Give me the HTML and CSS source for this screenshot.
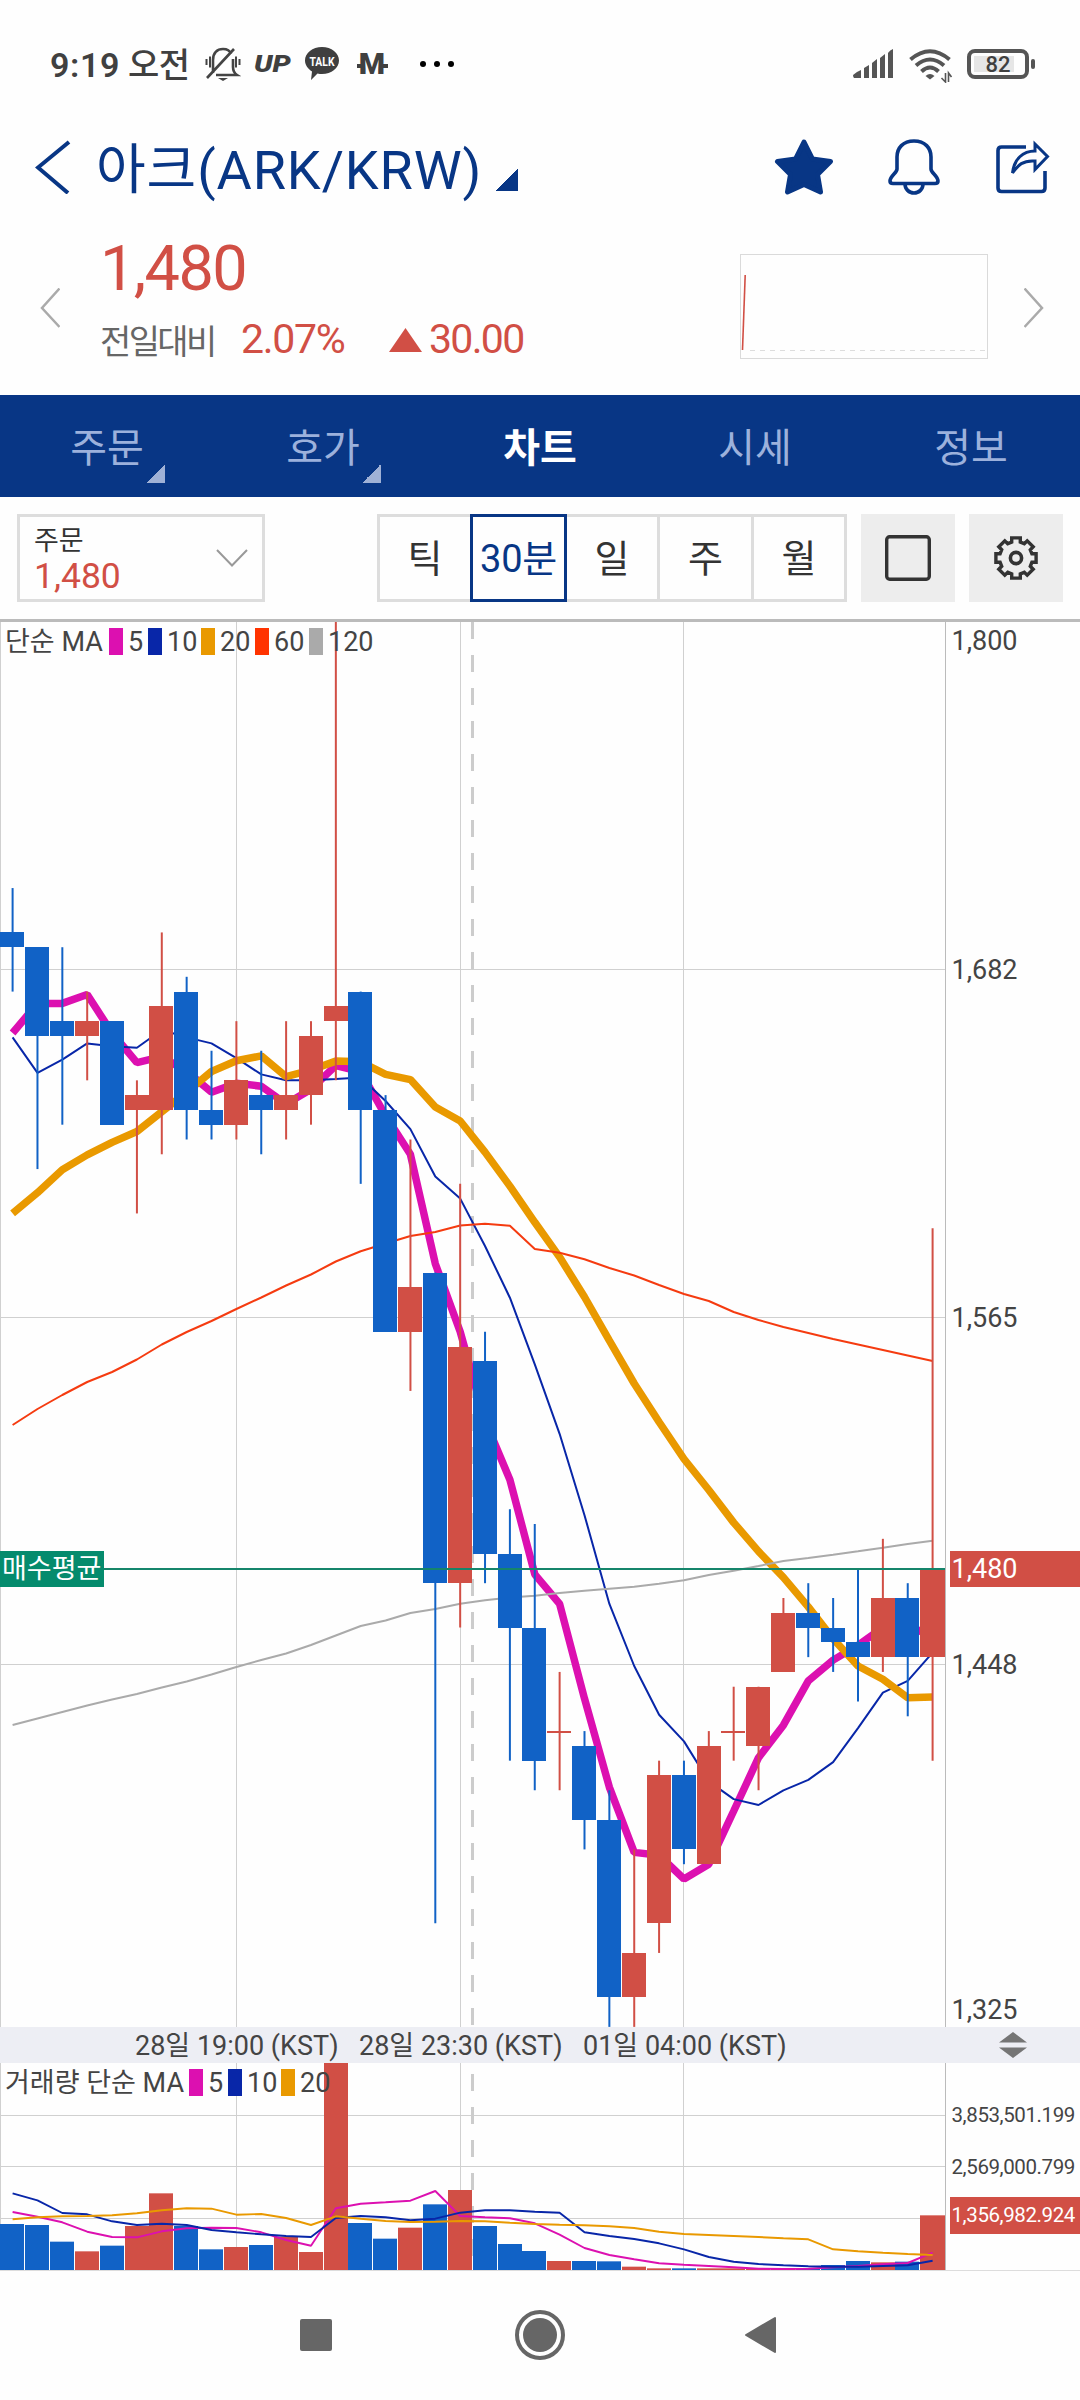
FILE: index.html
```html
<!DOCTYPE html>
<html lang="ko">
<head>
  <meta charset="UTF-8" />
  <meta name="viewport" content="width=device-width, initial-scale=1.0"/>
  <title>아크(ARK/KRW)</title>
  <link rel="stylesheet" href="styles.css">
</head>
<body>
  <div class="status-bar">
    <span class="time">9:19 <b>오전</b></span>
    <svg class="ico-mute" width="36" height="34" viewBox="0 0 36 34" fill="none" stroke="#444" stroke-width="2.6">
      <path d="M8 26V13C8 6 12 2 18 2c4 0 7 2 8 5M28 12v8c0 4 1 6 4 8H11M29 2L2 31"/>
      <path d="M1.500 12v6M5 9.500v11M31 9.500v11M34.500 12v6" stroke-width="2"/>
      <path d="M13 31h10l-5 3z" fill="#444" stroke="none"/>
    </svg>
    <span class="up">UP</span>
    <svg class="ico-talk" width="34" height="34" viewBox="0 0 34 34">
      <path fill="#3f3f3f" d="M17 0c9.500 0 17 6 17 13.500S26.500 27 17 27c-1.500 0-3 0-4.500-.5L6 33l1-8.500C3 22 0 18 0 13.500 0 6 7.500 0 17 0z"/>
      <text x="17" y="18.500" text-anchor="middle" textLength="25" lengthAdjust="spacingAndGlyphs" class="talk">TALK</text>
    </svg>
    <span class="mk">M</span>
    <span class="dots"><i></i><i></i><i></i></span>
    <svg class="ico-signal" width="42" height="30" viewBox="0 0 42 30" fill="#555">
      <path d="M0 26q3-3 8-5v8H1q-1-1-1-3zM11 19l5-3v13h-5zM19 14l5-4v19h-5zM27 9l5-4v24h-5zM35 4q2-3 5-4v29h-5z"/>
    </svg>
    <svg class="ico-wifi" width="44" height="34" viewBox="0 0 44 34" fill="none" stroke="#555" stroke-width="4">
      <path d="M1.500 10.500Q21 -6 40.500 10.500M7 16.500Q21 4.500 35 16.500M12.500 22.500Q21 14.500 29.500 22.500"/>
      <path d="M16.500 27q4.500-4 9 0l-4.500 3.500z" fill="#555" stroke="none"/>
      <path d="M36.500 24v9l-4-4M39.500 33v-9l3 4" stroke-width="1.600"/>
    </svg>
    <span class="battery">82</span><i class="nub"></i>
  </div>

  <div class="title-bar">
    <svg width="36" height="54" viewBox="0 0 36 54" fill="none" stroke="#083685" stroke-width="4">
      <path d="M34 2L3 27.500L33 53"/>
    </svg>
    <h1>아크(ARK/KRW)</h1>
    <i class="corner"></i>
    <div class="actions">
      <svg width="60" height="56" viewBox="0 0 60 56" fill="#083685" stroke="#083685" stroke-width="5" stroke-linejoin="round">
        <path d="M30 3L38.500 20L56.500 22.500L43.500 35.500L46.500 53L30 45.500L13.500 53L16.500 35.500L3.500 22.500L21.500 20Z"/>
      </svg>
      <svg width="54" height="56" viewBox="0 0 54 56" fill="none" stroke="#083685" stroke-width="3.600">
        <path d="M27 2C16 2 10 9 10 18v12c0 4-7 7-7 12 0 1.500 1 2.500 3 2.500h42c2 0 3-1 3-2.500 0-5-7-8-7-12V18C44 9 38 2 27 2z"/>
        <path d="M18 45c0 5 4 9 9 9s9-4 9-9"/>
      </svg>
      <svg width="54" height="54" viewBox="0 0 54 54" fill="none" stroke="#083685" stroke-width="3.600">
        <path d="M30 7H5.500Q2 7 2 10.500V48q0 3.500 3.500 3.500h40q3.500 0 3.500-3.500V31"/>
        <path d="M39 4L51.500 16.500L39 29.500V21C27 20 22 25 16.500 33C18 19 27 11 39 11Z" stroke-width="3"/>
      </svg>
    </div>
  </div>

  <div class="quote">
    <svg class="prev" width="20" height="40" viewBox="0 0 20 40"><path d="M19.500 .5L2 20L19.500 39"/></svg>
    <div class="quote-info">
      <div class="price">1,480</div>
      <div class="change">
        <span class="label">전일대비</span>
        <span class="rate">2.07%</span>
        <i class="up-arrow"></i>
        <span class="diff">30.00</span>
      </div>
    </div>
    <svg class="mini" width="248" height="105" viewBox="0 0 248 105" fill="none">
      <rect x=".5" y=".5" width="247" height="104" stroke="#dadada"/>
      <path d="M10 96.500H247" stroke="#ddd" stroke-dasharray="5 5"/>
      <path d="M2.500 96L5.200 21" stroke="#d14f45" stroke-width="1.600"/>
    </svg>
    <svg class="next" width="20" height="40" viewBox="0 0 20 40"><path d="M.5 .5L18 20L.5 39"/></svg>
  </div>

  <div class="tabs">
    <div class="tab more">주문</div>
    <div class="tab more">호가</div>
    <div class="tab active">차트</div>
    <div class="tab">시세</div>
    <div class="tab">정보</div>
  </div>

  <div class="toolbar">
    <div class="order">
      <div>
        <div class="order-label">주문</div>
        <div class="order-price">1,480</div>
      </div>
      <svg width="32" height="18" viewBox="0 0 32 18" fill="none" stroke="#999" stroke-width="2"><path d="M1 1L16 16.500L31 1"/></svg>
    </div>
    <div class="periods">
      <div class="period">틱</div>
      <div class="period active">30분</div>
      <div class="period">일</div>
      <div class="period">주</div>
      <div class="period">월</div>
    </div>
    <div class="tool">
      <svg width="46" height="46" viewBox="0 0 46 46" fill="none" stroke="#333" stroke-width="3.400"><rect x="1.700" y="1.700" width="42.600" height="42.600" rx="3"/></svg>
    </div>
    <div class="tool">
      <svg width="46" height="46" viewBox="0 0 46 46" fill="none" stroke="#333" stroke-width="3.600" id="gear">
        <circle cx="23" cy="23" r="5.600"/>
      </svg>
    </div>
  </div>

  <svg class="pane" id="priceChart" width="1080" height="1405" viewBox="0 0 1080 1405"></svg>
  <div class="time-axis">
    <span>28일 19:00 (KST)</span>
    <span>28일 23:30 (KST)</span>
    <span>01일 04:00 (KST)</span>
    <svg width="28" height="26" viewBox="0 0 28 26" fill="#757575"><path d="M14 0L28 10.500H0zM0 15.500h28L14 26z"/></svg>
  </div>
  <svg class="pane" id="volumeChart" width="1080" height="208" viewBox="0 0 1080 208"></svg>

  <div class="nav-bar">
    <svg width="32" height="32"><rect width="32" height="32" rx="2" fill="#666"/></svg>
    <svg width="50" height="50"><circle cx="25" cy="25" r="23" fill="none" stroke="#666" stroke-width="4"/><circle cx="25" cy="25" r="17" fill="#666"/></svg>
    <svg width="32" height="38"><path d="M1 19L30 2V36Z" fill="#666" stroke="#666" stroke-width="2" stroke-linejoin="round"/></svg>
  </div>

  <script src="chart.js"></script>
</body>
</html>
```

FILE: styles.css
```css
* {
  box-sizing: border-box;
}
body {
  width: 1080px;
  height: 2400px;
  margin: 0;
  overflow: hidden;
  background: #fefefe;
  color: #333;
  font-family: Roboto, "Noto Sans CJK KR", sans-serif;
}
svg {
  display: block;
  flex: none;
}
i {
  display: block;
  flex: none;
}

/* status bar */
.status-bar {
  display: flex;
  align-items: center;
  height: 128px;
  padding-left: 50px;
  color: #404040;
}
.time {
  width: 155px;
  padding-bottom: 3px;
  font-size: 34px;
  font-weight: 600;
  letter-spacing: 0.6px;
  white-space: nowrap;
}
.time b {
  font-weight: 500;
  margin-left: -1px;
  letter-spacing: -0.5px;
}
.up {
  width: 51px;
  margin-left: 13px;
  font-size: 24px;
  font-weight: 900;
  font-style: italic;
  transform: scaleX(1.2);
  transform-origin: left;
}
.talk {
  font-size: 12px;
  font-weight: 700;
  fill: #fff;
}
.mk {
  width: 31px;
  margin-left: 18px;
  font-size: 30px;
  line-height: 36px;
  font-weight: 900;
  text-align: center;
  text-indent: -1px;
  background:
    linear-gradient(#404040, #404040) 0 18px / 5px 4px no-repeat,
    linear-gradient(#404040, #404040) 100% 18px / 5px 4px no-repeat;
}
.dots {
  display: flex;
  gap: 8px;
  margin-left: 32px;
}
.dots i {
  width: 6px;
  height: 6px;
  border-radius: 50%;
  background: #000;
}
.ico-signal {
  margin-left: 399px;
}
.ico-wifi {
  margin-left: 14px;
  margin-top: 3px;
}
.battery {
  width: 62px;
  height: 30px;
  margin-left: 14px;
  border: 4px solid #555;
  border-radius: 8px;
  background: linear-gradient(#e6e6e6, #e6e6e6) 3px 3px / 40px 16px no-repeat;
  font-size: 22px;
  font-weight: 500;
  line-height: 24px;
  text-align: center;
}
.nub {
  width: 4px;
  height: 10px;
  margin-left: 2px;
  border-radius: 2px;
  background: #555;
}

/* title */
.title-bar {
  display: flex;
  align-items: center;
  height: 78px;
  padding-left: 35px;
}
.title-bar h1 {
  width: 400px;
  margin: -4px 0 0 25px;
  color: #083685;
  font-size: 54px;
  font-weight: 400;
  letter-spacing: 0.9px;
  white-space: nowrap;
}
.corner {
  width: 22px;
  height: 22px;
  margin-top: 26px;
  background: linear-gradient(135deg, transparent 50%, #083685 50%);
}
.actions {
  display: flex;
  align-items: center;
  gap: 53px;
  margin-left: 256px;
}
.actions svg:nth-child(2) {
  margin-right: 2px;
}

/* quote */
.quote {
  display: flex;
  height: 189px;
  padding-left: 40px;
}
.quote path {
  fill: none;
}
.prev, .next {
  margin-top: 82px;
  stroke: #aaa;
  stroke-width: 2.5;
}
.quote-info {
  width: 640px;
  margin-left: 40px;
  padding-top: 26px;
}
.price {
  color: #d14f45;
  font-size: 63px;
  line-height: 74px;
  letter-spacing: -1.6px;
}
.change {
  display: flex;
  align-items: center;
  height: 56px;
  margin-top: 5px;
  color: #d14f45;
  font-size: 41px;
  letter-spacing: -1.3px;
}
.change .label {
  width: 141px;
  color: #666;
  font-size: 34px;
  letter-spacing: -2.6px;
}
.rate {
  width: 148px;
}
.up-arrow {
  width: 33px;
  height: 24px;
  margin: 2px 7px 0 0;
  background: #d14f45;
  clip-path: polygon(50% 0, 100% 100%, 0 100%);
}
.diff {
  letter-spacing: -1.7px;
}
.mini {
  margin-top: 48px;
}
.next {
  margin-left: 36px;
}

/* tabs */
.tabs {
  display: flex;
  height: 102px;
  background: #083685;
}
.tab {
  position: relative;
  width: 216px;
  padding-right: 2px;
  color: #9cb1dc;
  font-size: 40px;
  line-height: 107px;
  text-align: center;
}
.tab.active {
  padding-right: 0;
  color: #fff;
  font-weight: 700;
}
.tab.more::after {
  content: "";
  position: absolute;
  right: 51px;
  top: 69px;
  width: 19px;
  height: 19px;
  background: linear-gradient(135deg, transparent 50%, #9fb1d6 50%);
}

/* toolbar */
.toolbar {
  display: flex;
  height: 125px;
  padding: 17px 17px 0;
  border-bottom: 3px solid #bbb;
}
.order {
  display: flex;
  align-items: center;
  justify-content: space-between;
  width: 248px;
  height: 88px;
  padding: 3px 14px 0 14px;
  border: 3px solid #ddd;
}
.order-label {
  font-size: 27px;
  line-height: 34px;
}
.order-price {
  color: #d14f45;
  font-size: 35.5px;
  line-height: 37px;
}
.order svg {
  margin-bottom: 3px;
}
.periods {
  display: flex;
  margin-left: 112px;
}
.period {
  width: 96.5px;
  height: 88px;
  margin-right: -3px;
  border: 3px solid #ddd;
  font-size: 38px;
  line-height: 84px;
  text-align: center;
}
.period.active {
  z-index: 1;
  border-color: #083685;
  color: #083685;
  letter-spacing: -0.3px;
}
.tool {
  display: flex;
  align-items: center;
  justify-content: center;
  width: 94px;
  height: 88px;
  margin-left: 14px;
  background: #ededed;
}
.periods + .tool {
  margin-left: 17px;
}

/* charts */
.pane text {
  fill: #444;
  font-size: 27px;
}
.pane text.small {
  font-size: 20.5px;
  letter-spacing: -0.4px;
}
.pane text.light {
  fill: #fff;
}
.grid {
  stroke: #d0d0d0;
  fill: none;
}
.day-line {
  stroke: #ccc;
  stroke-width: 3;
  stroke-dasharray: 17 16;
}
.time-axis {
  display: flex;
  align-items: center;
  height: 36px;
  padding-left: 135px;
  background: #edeef4;
  color: #444;
  font-size: 27px;
}
.time-axis span {
  width: 224px;
  padding-bottom: 3px;
  white-space: nowrap;
}
.time-axis svg {
  margin-left: 192px;
}

/* android navigation */
.nav-bar {
  display: flex;
  align-items: center;
  height: 128px;
  padding-left: 300px;
}
.nav-bar svg:nth-child(2) {
  margin: 0 204px 0 183px;
}
.nav-bar svg:nth-child(3) {
  margin-left: -24px;
}
```

FILE: chart.js
```js
const BLUE = "#1162c6", RED = "#d14f45";
const MA = { 5: "#dc10b0", 10: "#0826a8", 20: "#e99900", 60: "#f53b10", 120: "#aaa" };
const STEP = 24.865;
const PLOT_W = 946;

// open, high, low, close
const candles = [
  [1695,1710,1675,1690], [1690,1690,1615,1660], [1665,1690,1630,1660], [1660,1675,1645,1665],
  [1665,1665,1630,1630], [1635,1645,1600,1640], [1635,1695,1620,1670], [1675,1680,1625,1635],
  [1635,1655,1625,1630], [1630,1665,1625,1645], [1640,1655,1620,1635], [1635,1665,1625,1640],
  [1640,1665,1630,1660], [1665,1810,1645,1670], [1675,1675,1610,1635], [1635,1640,1560,1560],
  [1560,1625,1540,1575], [1580,1580,1360,1475], [1475,1610,1460,1555], [1550,1560,1475,1485],
  [1485,1500,1415,1460], [1460,1495,1405,1415], [1425,1445,1405,1425], [1420,1425,1385,1395],
  [1395,1405,1325,1335], [1335,1385,1325,1350], [1360,1415,1350,1410], [1410,1415,1380,1385],
  [1380,1425,1380,1420], [1425,1440,1415,1425], [1420,1440,1405,1440], [1445,1470,1445,1465],
  [1465,1475,1450,1460], [1460,1470,1445,1455], [1455,1480,1435,1450], [1450,1490,1445,1470],
  [1470,1475,1430,1450], [1450,1595,1415,1480]
];
// closes before the visible range, oldest first
const history = [1780,1615,1610,1640,1645,1610,1660,1650,1695];
const ma20Lead = [1600,1607,1614.8,1619.8,1624,1627.7,1634.4,1641,1648,1651.6];
// long averages, in pane pixels
const ma60 = [803,787,773,760,750,737.5,722.5,710,699,687,675.5,663.5,652.5,639.5,629.3,621.5,614,610,603.5,601.7,
  603.7,627,630.7,637.3,646,653.5,663,672,679,690,698,705,711,717,722.5,728,733.5,739];
const ma120 = [1103,1096.5,1090,1083.5,1077.5,1072,1065.5,1059.5,1052.5,1045,1038,1031.5,1023,1013.5,1004,998.5,991,987,981.7,978.3,
  975.5,973.7,971,968.7,966.7,964.7,961.7,958.3,953,948.7,944,939,936,932.7,929.3,925.7,922,918.7];

// volumes, in units of about 8,287
const volumes = [138,135,85,56,73,132,230,132,62,69,75,100,54,640,141,94,127,197,240,132,78,57,27,27,26,10,5,5,5,5,4,4,5,15,27,23,25,164];
const vma5 = [174,160,143,115,99,98,116,125,127,126,113,90,73,185,199,203,208,237,162,158,155,140,106,66,45,32,20,16,12,8,4,3,4,8,12,17,21,52];
const vma10 = [230,209,171,167,146,135,139,135,120,113,107,102,99,156,162,158,149,154,172,179,179,175,172,113,102,93,80,62,39,25,18,14,11,10,10,12,14,28];
const vma20 = [152,158,161,162,164,170,179,185,184,166,168,156,135,161,154,147,144,145,147,146,142,138,136,134,131,126,115,108,105,102,99,95,92,62,56,52,48,45];

const cx = i => 12.6 + i * STEP;
const py = p => 946.4 + (1480 - p) * 2.958;
const vy = v => 207 - v / 3;

function line(x1, y1, x2, y2, attrs) {
  return `<line x1="${x1}" y1="${y1}" x2="${x2}" y2="${y2}" ${attrs}/>`;
}
function rect(x, y, w, h, fill) {
  return `<rect x="${x}" y="${y}" width="${w}" height="${h}" fill="${fill}"/>`;
}
function text(x, y, s, cls = "") {
  return `<text x="${x}" y="${y}" class="${cls}">${s}</text>`;
}
function curve(ys, color, width) {
  const pts = ys.map((y, i) => `${cx(i).toFixed(1)},${y.toFixed(1)}`).join(" ");
  return `<polyline points="${pts}" fill="none" stroke="${color}" stroke-width="${width}" stroke-linejoin="bevel"/>`;
}
function sma(n) {
  const closes = history.concat(candles.map(c => c[3]));
  const out = [];
  for (let i = 0; i < candles.length; i++) {
    const end = i + history.length + 1;
    if (end < n) { out.push(null); continue; }
    out.push(closes.slice(end - n, end).reduce((a, b) => a + b) / n);
  }
  return out;
}
function gridX(h) {
  return [0.5, 236.5, 460.5, 683.5].map(x => line(x, 0, x, h, 'class="grid"')).join("");
}
function legend(y, title, items) {
  let s = text(5, y + 10, title);
  for (const [n, sx, tx] of items) {
    s += rect(sx, y - 13, 14, 27, n === 60 ? "#ff3300" : MA[n]) + text(tx, y + 10, n);
  }
  return s;
}

function drawPrice() {
  let s = gridX(1405);
  s += [347.5, 695.5, 1042.5].map(y => line(0, y, PLOT_W, y, 'class="grid"')).join("");
  s += line(472.5, 0, 472.5, 1405, 'class="day-line"');
  s += curve(sma(5).map(py), MA[5], 7.5);
  s += curve(sma(10).map(py), MA[10], 2);
  s += curve(sma(20).map((v, i) => py(i < 10 ? ma20Lead[i] : v)), MA[20], 7.5);
  s += curve(ma60, MA[60], 2) + curve(ma120, MA[120], 2);
  candles.forEach(([o, h, l, c], i) => {
    const color = c >= o ? RED : BLUE;
    const top = Math.round(py(Math.max(o, c)));
    const bottom = Math.round(py(Math.min(o, c)));
    const left = Math.max(0, Math.round(cx(i) - 12.3));
    s += line(cx(i), py(h), cx(i), py(l), `stroke="${color}" stroke-width="2"`);
    s += rect(left, top, i === 37 ? PLOT_W - left : 24, Math.max(2, bottom - top), color);
  });
  s += line(0, 947, PLOT_W, 947, 'stroke="#15856b" stroke-width="2"');
  s += line(945.5, 0, 945.5, 1405, 'stroke="#bbb"');
  s += rect(0, 929, 104, 36, "#058b6d") + text(2, 956, "매수평균", "light");
  s += legend(19, "단순 MA", [[5, 109, 128], [10, 148, 167], [20, 201, 220], [60, 255, 274], [120, 309, 328]]);
  [["1,800", 18], ["1,682", 347], ["1,565", 695], ["1,448", 1042], ["1,325", 1387]].forEach(([t, y]) => {
    s += text(951.5, y + 10, t);
  });
  s += rect(950, 929, 130, 36, RED) + text(951.5, 956, "1,480", "light");
  document.getElementById("priceChart").innerHTML = s;
}

function drawVolume() {
  let s = gridX(207);
  s += [52.5, 103.5, 155.5].map(y => line(0, y, PLOT_W, y, 'class="grid"')).join("");
  s += line(472.5, 11, 472.5, 207, 'class="day-line"');
  volumes.forEach((v, i) => {
    const left = Math.max(0, Math.round(cx(i) - 12.3));
    const top = Math.max(0, vy(v));
    s += rect(left, top, i === 37 ? PLOT_W - left : 24, 207 - top, candles[i][3] >= candles[i][0] ? RED : BLUE);
  });
  s += curve(vma5.map(vy), MA[5], 1.9) + curve(vma10.map(vy), MA[10], 1.9) + curve(vma20.map(vy), MA[20], 1.9);
  s += line(945.5, 0, 945.5, 207, 'stroke="#bbb"');
  s += line(0, 207.5, 1080, 207.5, 'stroke="#ddd"');
  s += legend(19, "거래량 단순 MA", [[5, 189, 208], [10, 228, 247], [20, 281, 300]]);
  s += text(951.5, 59, "3,853,501.199", "small") + text(951.5, 111, "2,569,000.799", "small");
  s += rect(950, 134, 130, 37, RED) + text(951.5, 159, "1,356,982.924", "small light");
  document.getElementById("volumeChart").innerHTML = s;
}

function drawGear() {
  let d = "";
  for (let i = 0; i < 8; i++) {
    [[-15, 16.5], [-12, 20.5], [12, 20.5], [15, 16.5]].forEach(([deg, r]) => {
      const a = (i * 45 - 90 + deg) * Math.PI / 180;
      d += (d ? "L" : "M") + (23 + r * Math.cos(a)).toFixed(1) + " " + (23 + r * Math.sin(a)).toFixed(1);
    });
  }
  document.getElementById("gear").innerHTML += `<path d="${d}Z" stroke-width="3.400"/>`;
}

drawPrice();
drawVolume();
drawGear();
```
